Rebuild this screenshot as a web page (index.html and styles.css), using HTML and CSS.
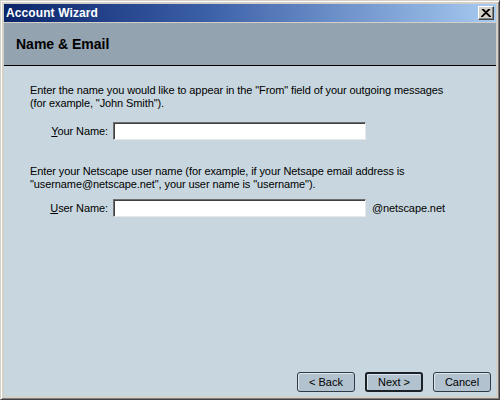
FILE: index.html
```html
<!DOCTYPE html>
<html>
<head>
<meta charset="utf-8">
<link rel="stylesheet" href="styles.css">
</head>
<body>
<div class="window">
  <div class="titlebar">
    <span class="title">Account Wizard</span>
    <span class="close">
      <svg width="10" height="8" viewBox="0 0 10 8"><path d="M1 0 L9 8 M9 0 L1 8 M2 0 L10 8 M8 0 L0 8" stroke="#000" stroke-width="1.2" fill="none"/></svg>
    </span>
  </div>
  <div class="header">Name &amp; Email</div>
  <div class="content">
    <p class="para p1">Enter the name you would like to appear in the "From" field of your outgoing messages<br>(for example, "John Smith").</p>
    <div class="row r1">
      <label class="label"><u>Y</u>our Name:</label>
      <span class="input"></span>
    </div>
    <p class="para p2">Enter your Netscape user name (for example, if your Netsape email address is<br>"username@netscape.net", your user name is "username").</p>
    <div class="row r2">
      <label class="label"><u>U</u>ser Name:</label>
      <span class="input"></span>
      <span class="suffix">@netscape.net</span>
    </div>
    <div class="buttons">
      <span class="btn">&lt; Back</span>
      <span class="btn default">Next &gt;</span>
      <span class="btn">Cancel</span>
    </div>
  </div>
</div>
</body>
</html>
```
FILE: styles.css
```css
html, body {
  margin: 0;
  padding: 0;
}
body {
  width: 500px;
  height: 400px;
  font-family: "Liberation Sans", Arial, sans-serif;
  font-size: 11px;
  color: #000;
}
.window {
  box-sizing: border-box;
  width: 500px;
  height: 400px;
  background: #d4d0c8;
  border: 1px solid;
  border-color: #d4d0c8 #404040 #404040 #d4d0c8;
  box-shadow: inset 1px 1px #ffffff, inset -1px -1px #808080;
  padding: 3px;
  display: flex;
  flex-direction: column;
}
.titlebar {
  height: 18px;
  background: linear-gradient(to right, #0a246a 0%, #3a5ea6 40%, #a6caf0 100%);
  display: flex;
  align-items: center;
  justify-content: space-between;
  padding: 0 2px 0 2px;
}
.title {
  color: #fff;
  font-weight: bold;
  font-size: 12px;
  letter-spacing: 0.1px;
}
.close {
  box-sizing: border-box;
  width: 16px;
  height: 14px;
  background: #d4d0c8;
  border: 1px solid;
  border-color: #fff #404040 #404040 #fff;
  box-shadow: inset -1px -1px #808080;
  display: flex;
  align-items: center;
  justify-content: center;
}
.header {
  margin-top: 1px;
  height: 42px;
  background: #94a3b0;
  border-bottom: 1px solid #000;
  font-weight: bold;
  font-size: 14px;
  padding-left: 12px;
  display: flex;
  align-items: center;
}
.content {
  flex: 1;
  background: #c8d7df;
  display: flex;
  flex-direction: column;
  padding: 0 4px 4px 26px;
  letter-spacing: -0.1px;
}
.para {
  margin: 0;
  line-height: 13px;
}
.p1 { margin-top: 18px; }
.p2 { margin-top: 25px; }
.row {
  display: flex;
  align-items: center;
  height: 18px;
}
.r1 { margin-top: 12px; }
.r2 { margin-top: 8px; }
.label {
  width: 83px;
  text-align: right;
  padding-right: 5px;
  box-sizing: border-box;
}
.input {
  box-sizing: border-box;
  width: 253px;
  height: 18px;
  background: #fff;
  border: 1px solid;
  border-color: #6e6e6e #e8e8e8 #e8e8e8 #6e6e6e;
  box-shadow: inset 1px 1px #404040;
}
.suffix {
  margin-left: 6px;
}
.buttons {
  margin-top: auto;
  display: flex;
  justify-content: flex-end;
  gap: 10px;
  padding-right: 1px;
}
.btn {
  box-sizing: border-box;
  width: 58px;
  height: 20px;
  background: #b2c2ce;
  border: 1px solid #2e3a44;
  border-radius: 3px;
  box-shadow: inset 1px 1px #dde6ec;
  display: flex;
  align-items: center;
  justify-content: center;
  font-size: 11px;
  letter-spacing: 0;
}
.btn.default {
  border: 2px solid #1a2228;
}
```
